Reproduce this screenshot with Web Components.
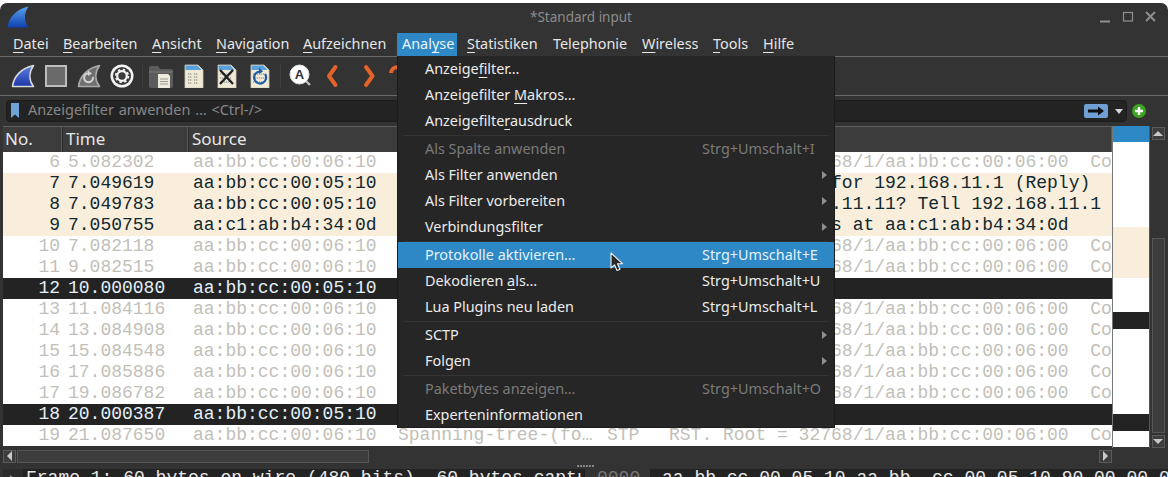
<!DOCTYPE html>
<html lang="de">
<head>
<meta charset="utf-8">
<title>Wireshark</title>
<style>
  html, body { margin: 0; height: 477px; overflow: hidden; background: #fff; }
  body { font-family: "Noto Sans", sans-serif; }
</style>
</head>
<body>
<ws-window>
  <ws-titlebar slot="top">*Standard input</ws-titlebar>
  <ws-menubar slot="top"></ws-menubar>
  <ws-toolbar slot="top"></ws-toolbar>
  <ws-filterbar slot="top"></ws-filterbar>
  <ws-packets slot="top"></ws-packets>
  <ws-bottom slot="top"></ws-bottom>
  <ws-menu slot="overlay"></ws-menu>
</ws-window>

<script>
const UI_FONT = '"Noto Sans", sans-serif';
const MONO_FONT = '"Liberation Mono", monospace';

const SHARK = 'M1.5 22.5C2.500 13 10 4 22.500 1.500C18 8 17.500 16 22.500 22.500Z';

function docIcon(inner) {
  return `<path d="M3 1h13l5 5v18H3z" fill="#efe9d6" stroke="#cfcab8" stroke-width=".8"/>
    <path d="M3.500 1.500h12l4 4.500H3.500z" fill="#5aa0dc"/><g transform="translate(2 0)">${inner}</g>`;
}

const ICONS = {
  shark: `<defs><linearGradient id="s" x1="0" y1="0" x2="0" y2="1"><stop offset="0" stop-color="#5f7fe0"/><stop offset="1" stop-color="#1d36a8"/></linearGradient></defs>
    <path d="${SHARK}" fill="url(#s)" stroke="#d9d9d9" stroke-width="1.600" stroke-linejoin="round"/>`,
  stop: `<rect x="2" y="2" width="20" height="20" fill="#6a6a6a" stroke="#bdbdbd" stroke-width="2"/>`,
  reload: `<path d="${SHARK}" fill="#6f6f6f" stroke="#a9a9a9" stroke-width="1.600" stroke-linejoin="round"/>
    <path d="M16 13a4.500 4.500 0 1 1-3-3.600" fill="none" stroke="#d2d2d2" stroke-width="2"/><path d="M11 6.500l4 3-4 2.500z" fill="#d2d2d2"/>`,
  gear: `<circle cx="12" cy="12" r="11.500" fill="#f4f4f4"/><circle cx="12" cy="12" r="9" fill="#3a3a3a"/>
    <circle cx="12" cy="12" r="4.800" fill="none" stroke="#f4f4f4" stroke-width="2.200"/>
    <circle cx="12" cy="12" r="6.300" fill="none" stroke="#f4f4f4" stroke-width="1.800" stroke-dasharray="2.400 2.550"/>`,
  folder: `<path d="M0 4q0-2 2-2h7l2 3h11q2 0 2 2v15q0 2-2 2H2q-2 0-2-2z" fill="#5c5c5c"/><path d="M0 8h24" stroke="#7a7a7a"/>
    <path d="M9 10h10l2 2v12H9z" fill="#eeeade"/><path d="M11 15h8M11 17.500h8M11 20h8" stroke="#9a9a8c"/>`,
  doc: docIcon(`<path d="M4 10h4M10 10h4M4 13h4M10 13h4M4 16h4M10 16h4M4 19h4M10 19h4" stroke="#9a9a8c" stroke-width="1.400" stroke-dasharray="1.200 .8"/>`),
  close: docIcon(`<path d="M3 10h12M3 14h12M3 18h12" stroke="#9aa7a0" stroke-width="1.400" stroke-dasharray="1.200 .8"/><path d="M3 6l13 14M16 6L3 20" stroke="#222" stroke-width="2.400"/>`),
  redo: docIcon(`<path d="M3 10h12M3 14h12M3 18h12" stroke="#9aa7a0" stroke-width="1.400" stroke-dasharray="1.200 .8"/><path d="M15 10a6 6 0 1 1-5-2.500" fill="none" stroke="#1c5fa8" stroke-width="2.200"/><path d="M9 3.500l4 4-4 2.500z" fill="#1c5fa8"/>`),
  find: `<path d="M15 15l6 6" stroke="#bdbdbd" stroke-width="2.400"/><circle cx="10.500" cy="10.500" r="9.500" fill="#fff" stroke="#ddd"/>
    <text x="10.500" y="15" text-anchor="middle" font-family="Liberation Sans" font-weight="700" font-size="13" fill="#333">A</text>`,
  prev: `<path d="M13.500 3L7 12l6.500 9" fill="none" stroke="#e2642a" stroke-width="4" stroke-linejoin="round" stroke-linecap="round"/>`,
  next: `<path d="M11 3l6.500 9-6.500 9" fill="none" stroke="#e2642a" stroke-width="4" stroke-linejoin="round" stroke-linecap="round"/>`,
  jump: `<path d="M3 9a6 6 0 1 1 8 6v4" fill="none" stroke="#e2642a" stroke-width="4"/>`
};

function define(name, render) {
  customElements.define(name, class extends HTMLElement {
    constructor() {
      super();
      this.attachShadow({ mode: 'open' });
    }
    connectedCallback() {
      this.shadowRoot.innerHTML = render(this);
    }
  });
}

define('ws-window', () => `
  <style>
    :host { display: block; position: relative; margin-top: 3px; height: 474px; background: #333;
            border-radius: 7px 7px 0 0; overflow: hidden; }
  </style>
  <slot name="top"></slot>
  <slot name="overlay"></slot>`);

define('ws-icon', el => `
  <style>:host { display: block; width: 24px; height: 24px; } svg { display: block; }</style>
  <svg width="24" height="24" viewBox="0 0 24 24">${ICONS[el.getAttribute('name')]}</svg>`);

define('ws-titlebar', el => `
  <style>
    :host { display: grid; grid-template-columns: 1fr auto 1fr; align-items: center; height: 30px; padding: 0 12px 2px 6px;
            box-sizing: border-box; font: 13.500px ${UI_FONT}; color: #8c8c8c; }
    .ctl { justify-self: end; }
    svg { display: block; }
  </style>
  <svg width="24" height="24" viewBox="0 0 24 24">
    <defs><linearGradient id="t" x1="0" y1="0" x2="0" y2="1"><stop offset="0" stop-color="#5aa4ee"/><stop offset="1" stop-color="#0f3fb0"/></linearGradient></defs>
    <path d="${SHARK}" fill="url(#t)"/>
  </svg>
  <span><slot></slot></span>
  <svg class="ctl" width="56" height="12" viewBox="0 0 56 12" fill="none" stroke="#8f8f8f">
    <path d="M0 10.500h10" stroke-width="2"/>
    <rect x="23.500" y="1.500" width="9" height="8.500" stroke-width="1.200"/>
    <path d="M46 1l9 9M55 1l-9 9" stroke-width="2"/>
  </svg>`);

const MENUS = [
  ['<u>D</u>atei', 50], ['<u>B</u>earbeiten', 89], ['<u>A</u>nsicht', 64], ['<u>N</u>avigation', 87],
  ['<u>A</u>ufzeichnen', 99], ['Anal<u>y</u>se', 60, true], ['<u>S</u>tatistiken', 86], ['Telephonie', 89],
  ['<u>W</u>ireless', 71], ['<u>T</u>ools', 50], ['<u>H</u>ilfe', 60]
];

define('ws-menubar', () => `
  <style>
    :host { display: flex; height: 24px; padding-left: 8px; box-sizing: border-box;
            border-bottom: 1px solid #6a6a6a;
            font: 14.400px ${UI_FONT}; color: #e6e6e6; }
    span { display: block; box-sizing: border-box; padding: 0 5px; line-height: 22px; height: 23px; white-space: nowrap; }
    .on { background: #2d88c5; color: #eaf4fb; margin-right: 5px; }
    u { text-underline-offset: 3px; text-decoration-thickness: 1px; }
  </style>
  ${MENUS.map(([t, w, on]) => `<span class="${on ? 'on' : ''}" style="width:${w}px">${t}</span>`).join('')}`);

define('ws-toolbar', () => {
  const slot = n => `<div class="slot"><ws-icon name="${n}"></ws-icon></div>`;
  return `
  <style>
    :host { display: flex; align-items: center; height: 38px; padding-left: 6px; border-bottom: 1px solid #6a6a6a; }
    .slot { display: flex; justify-content: center; width: 33px; flex: none; }
    .sep { width: 1px; height: 24px; background: #3f3f3f; margin: 0 1px 0 4px; flex: none; }
    .sep.b { margin-right: 3px; }
  </style>
  ${['shark', 'stop', 'reload', 'gear'].map(slot).join('')}
  <div class="sep"></div>
  ${['folder', 'doc', 'close', 'redo'].map(slot).join('')}
  <div class="sep b"></div>
  ${['find', 'prev', 'next', 'jump'].map(slot).join('')}`;
});

define('ws-filterbar', () => `
  <style>
    :host { display: flex; align-items: center; height: 30px; box-sizing: border-box; padding: 0 6px; gap: 5px; }
    .box { flex: 1; height: 22px; box-sizing: border-box; background: #232323; border: 1px solid #1c1c1c; border-radius: 4px;
           display: flex; align-items: center; padding: 0 2px 0 4px; gap: 9px;
           font: 14.500px/18px ${UI_FONT}; word-spacing: 1px; color: #878787; }
    .txt { flex: 1; padding-bottom: 4px; }
    svg { display: block; flex: none; }
  </style>
  <div class="box">
    <svg width="8" height="15" viewBox="0 0 8 15" style="margin-top:-2px"><path d="M0 0h8v15L4 11.500 0 15z" fill="#6fa3d8"/></svg>
    <span class="txt">Anzeigefilter anwenden … &lt;Ctrl-/&gt;</span>
    <svg width="24" height="14" viewBox="0 0 24 14" style="margin-right:-4px"><rect width="24" height="14" rx="2" fill="#6f9fd4"/><path d="M4 5.500h10V2.500l6 4.500-6 4.500V8.500H4z" fill="#111"/></svg>
    <svg width="8" height="5" viewBox="0 0 8 5" style="margin:0 1px 0 2px"><path d="M0 0h8L4 5z" fill="#d5d5d5"/></svg>
  </div>
  <svg width="14" height="14" viewBox="0 0 14 14" style="margin-right:16px"><circle cx="7" cy="7" r="7" fill="#3da322"/><path d="M7 3v8M3 7h8" stroke="#fff" stroke-width="2.400"/></svg>`);

const STP = 'RST. Root = 32768/1/aa:bb:cc:00:06:00  Cost = 0  Port = 0x8001';
const ROWS = [
  [6, '5.082302', 'dim'], [7, '7.049619', 'arp', 'Gratuitous ARP for 192.168.11.1 (Reply)'],
  [8, '7.049783', 'arp', 'Who has 192.168.11.11? Tell 192.168.11.1'],
  [9, '7.050755', 'arp', '192.168.11.11 is at aa:c1:ab:b4:34:0d', 'aa:c1:ab:b4:34:0d'],
  [10, '7.082118', 'dim'], [11, '9.082515', 'dim'], [12, '10.000080', 'blk'], [13, '11.084116', 'dim'],
  [14, '13.084908', 'dim'], [15, '15.084548', 'dim'], [16, '17.085886', 'dim'], [17, '19.086782', 'dim'],
  [18, '20.000387', 'blk'], [19, '21.087650', 'dim']
];

define('ws-packet-row', el => {
  const kind = el.getAttribute('kind');
  const src = el.getAttribute('src');
  const info = el.getAttribute('info') || '';
  const dest = kind === 'dim' ? 'Spanning-tree-(fo…' : '';
  const proto = kind === 'dim' ? 'STP' : kind === 'arp' ? 'ARP' : '';
  return `
  <style>
    :host { display: grid; grid-template-columns: 57px 129px 205px 209px 62px 447px; height: 21px;
            font: 18px/21px ${MONO_FONT}; white-space: pre; overflow: hidden; }
    :host([kind=dim]) { background: #fff; color: #c2bfb9; }
    :host([kind=arp]) { background: #f8eedb; color: #12272e; }
    :host([kind=blk]) { background: #232323; color: #e4f0fa; }
    span { overflow: hidden; padding-left: 4px; }
    .no { text-align: right; padding: 0; }
  </style>
  <span class="no">${el.getAttribute('no')}</span>
  <span style="padding-left:8px">${el.getAttribute('time')}</span>
  <span>${src}</span><span>${dest}</span><span>${proto}</span><span>${info}</span>`;
});

define('ws-minimap', () => {
  const marks = [['#2d88c5', 16], ['#fff', 85], ['#f8eedb', 51], ['#fff', 34], ['#232323', 17], ['#fff', 85], ['#232323', 17], ['#fff', 16]];
  return `
  <style>
    :host { display: flex; flex-direction: column; width: 38px; box-sizing: border-box; flex: none; border-left: 1px solid #777; border-right: 1px solid #555; }
    div { flex: none; }
  </style>
  ${marks.map(([c, h]) => `<div style="background:${c};height:${h}px"></div>`).join('')}`;
});

define('ws-scroll-button', el => {
  const paths = { up: 'M0 5L5 0l5 5z', down: 'M0 0h10L5 5z', left: 'M5 -3v10L0 2z', right: 'M0 -3l5 5-5 5z' };
  return `
  <style>
    :host { display: flex; align-items: center; justify-content: center; width: 13px; height: 13px; flex: none;
            box-sizing: border-box; background: #3d3d3d; border: 1px solid #5a5a5a; }
    svg { display: block; }
  </style>
  <svg width="10" height="10" viewBox="0 0 10 10" style="overflow:visible"><path d="${paths[el.getAttribute('dir')]}" transform="translate(${/left|right/.test(el.getAttribute('dir')) ? 2 : 0} 2)" fill="#c9c9c9"/></svg>`;
});

define('ws-vscroll', () => `
  <style>
    :host { display: flex; flex-direction: column; width: 16px; flex: none; align-items: center; padding-top: 1px; box-sizing: border-box; background: #333; }
    .track { flex: 1; width: 13px; display: flex; flex-direction: column; justify-content: flex-end; }
    .thumb { height: 195px; box-sizing: border-box; background: #3d3d3d; border: 1px solid #555; margin-bottom: 2px; }
  </style>
  <ws-scroll-button dir="up"></ws-scroll-button>
  <div class="track"><div class="thumb"></div></div>
  <ws-scroll-button dir="down"></ws-scroll-button>`);

define('ws-hscroll', () => `
  <style>
    :host { display: flex; height: 13px; width: 1109px; margin-top: 2px; }
    .track { flex: 1; display: flex; padding-left: 1px; }
    .thumb { width: 352px; box-sizing: border-box; background: #3d3d3d; border: 1px solid #555; }
  </style>
  <ws-scroll-button dir="left"></ws-scroll-button>
  <div class="track"><div class="thumb"></div></div>
  <ws-scroll-button dir="right"></ws-scroll-button>`);

define('ws-packets', () => `
  <style>
    :host { display: flex; height: 322px; padding: 0 3px; box-sizing: border-box; }
    .list { width: 1109px; flex: none; display: flex; flex-direction: column; overflow: hidden; }
    .head { display: grid; grid-template-columns: 59px 126px 1fr; height: 26px; flex: none; box-sizing: border-box;
            background: #3c3c3c; border-top: 1px solid #5e5e5e; font: 17px/23px ${UI_FONT}; color: #e6e6e6; }
    .head span { padding-left: 2px; border-right: 1px solid #5a5a5a; }
    .head span + span { padding-left: 3px; border-left: 1px solid #2a2a2a; }
  </style>
  <div class="list">
    <div class="head"><span>No.</span><span>Time</span><span>Source</span></div>
    ${ROWS.map(([no, time, kind, info, src]) => {
      const from = src || (kind === 'dim' ? 'aa:bb:cc:00:06:10' : 'aa:bb:cc:00:05:10');
      const text = kind === 'dim' ? STP : info || '';
      return `<ws-packet-row no="${no}" time="${time}" kind="${kind}" src="${from}" info="${text}"></ws-packet-row>`;
    }).join('')}
  </div>
  <ws-minimap></ws-minimap>
  <ws-vscroll></ws-vscroll>`);

define('ws-bottom', () => `
  <style>
    :host { display: block; padding: 0 0 0 3px; }
    .grip { height: 6px; display: flex; justify-content: center; gap: 1px; padding: 2px 0 0; box-sizing: border-box; }
    .grip div { width: 2px; height: 2px; background: #888; }
    .panes { display: flex; height: 20px; background: #232323; font: 18px/18px ${MONO_FONT}; color: #e8e8e8; white-space: pre; overflow: hidden; }
    .gutter { width: 20px; flex: none; background: #2c2c2c; position: relative; }
    .gutter svg { position: absolute; left: 7px; top: 6px; }
    .tree { width: 562px; flex: none; padding-left: 3px; overflow: hidden; box-sizing: border-box; border-right: 1px solid #1c1c1c; }
    .off { width: 65px; flex: none; box-sizing: border-box; padding-left: 12px; background: #333; color: #787878; }
    .hex { flex: 1; padding-left: 12px; overflow: hidden; }
  </style>
  <ws-hscroll></ws-hscroll>
  <div class="grip"><div></div><div></div><div></div><div></div><div></div><div></div></div>
  <div class="panes">
    <div class="gutter"><svg width="5" height="8" viewBox="0 0 5 8"><path d="M0 0l5 4-5 4z" fill="#999"/></svg></div>
    <div class="tree">Frame 1: 60 bytes on wire (480 bits), 60 bytes captured</div>
    <div class="off">0000</div>
    <div class="hex">aa bb cc 00 05 10 aa bb  cc 00 05 10 90 00 00 00</div>
  </div>`);

const MENU = [
  { t: 'Anzeige<u>f</u>ilter…' }, { t: 'Anzeigefilter <u>M</u>akros…' }, { t: 'Anzeigefilte<u>r</u>ausdruck' }, null,
  { t: 'Als Spalte anwenden', k: 'Strg+Umschalt+I', off: 1 }, { t: 'Als Filter anwenden', sub: 1 },
  { t: 'Als Filter vorbereiten', sub: 1 }, { t: 'Verbindungsfilter', sub: 1 }, null,
  { t: 'Protokolle aktivieren…', k: 'Strg+Umschalt+E', on: 1 }, { t: 'Dekodieren <u>a</u>ls…', k: 'Strg+Umschalt+U' },
  { t: 'Lua Plugins neu laden', k: 'Strg+Umschalt+L' }, null,
  { t: 'SCTP', sub: 1 }, { t: 'Folgen', sub: 1 }, null,
  { t: 'Paketbytes anzeigen…', k: 'Strg+Umschalt+O', off: 1 }, { t: 'Experteninformationen' }
];

define('ws-menu', () => `
  <style>
    :host { position: absolute; left: 397px; top: 53px; width: 438px; box-sizing: border-box;
            background: #262626; border: 1px solid #1c1c1c; border-top: 0; font: 14.400px ${UI_FONT}; color: #ececec; }
    .item { display: flex; align-items: center; height: 26px; box-sizing: border-box; padding: 0 0 2px 27px; position: relative; }
    .item.last { height: 25px; padding-bottom: 1px; }
    .label { width: 277px; white-space: nowrap; }
    .off { color: #7a7a7a; }
    .on { background: #2d88c5; color: #e4f1fa; }
    .sep { height: 1px; margin: 1px 5px 0; background: #343434; }
    .arrow { position: absolute; right: 7px; top: 9px; }
    u { text-underline-offset: 3px; text-decoration-thickness: 1px; }
    .cursor { position: absolute; left: 212px; top: 196px; }
  </style>
  ${MENU.map((m, i) => m === null ? '<div class="sep"></div>' : `
    <div class="item ${m.off ? 'off' : ''} ${m.on ? 'on' : ''} ${i === MENU.length - 1 ? 'last' : ''}">
      <span class="label">${m.t}</span><span>${m.k || ''}</span>
      ${m.sub ? '<svg class="arrow" width="5" height="8" viewBox="0 0 5 8"><path d="M0 0l5 4-5 4z" fill="#8f8f8f"/></svg>' : ''}
    </div>`).join('')}
  <svg class="cursor" width="14" height="20" viewBox="0 0 14 20"><path d="M1 1v15l3.500-3.200 2.500 5.700 3-1.300-2.500-5.500h5z" fill="#2a2a2a" stroke="#f2f2f2" stroke-width="1.100" stroke-linejoin="round"/></svg>`);
</script>
</body>
</html>
